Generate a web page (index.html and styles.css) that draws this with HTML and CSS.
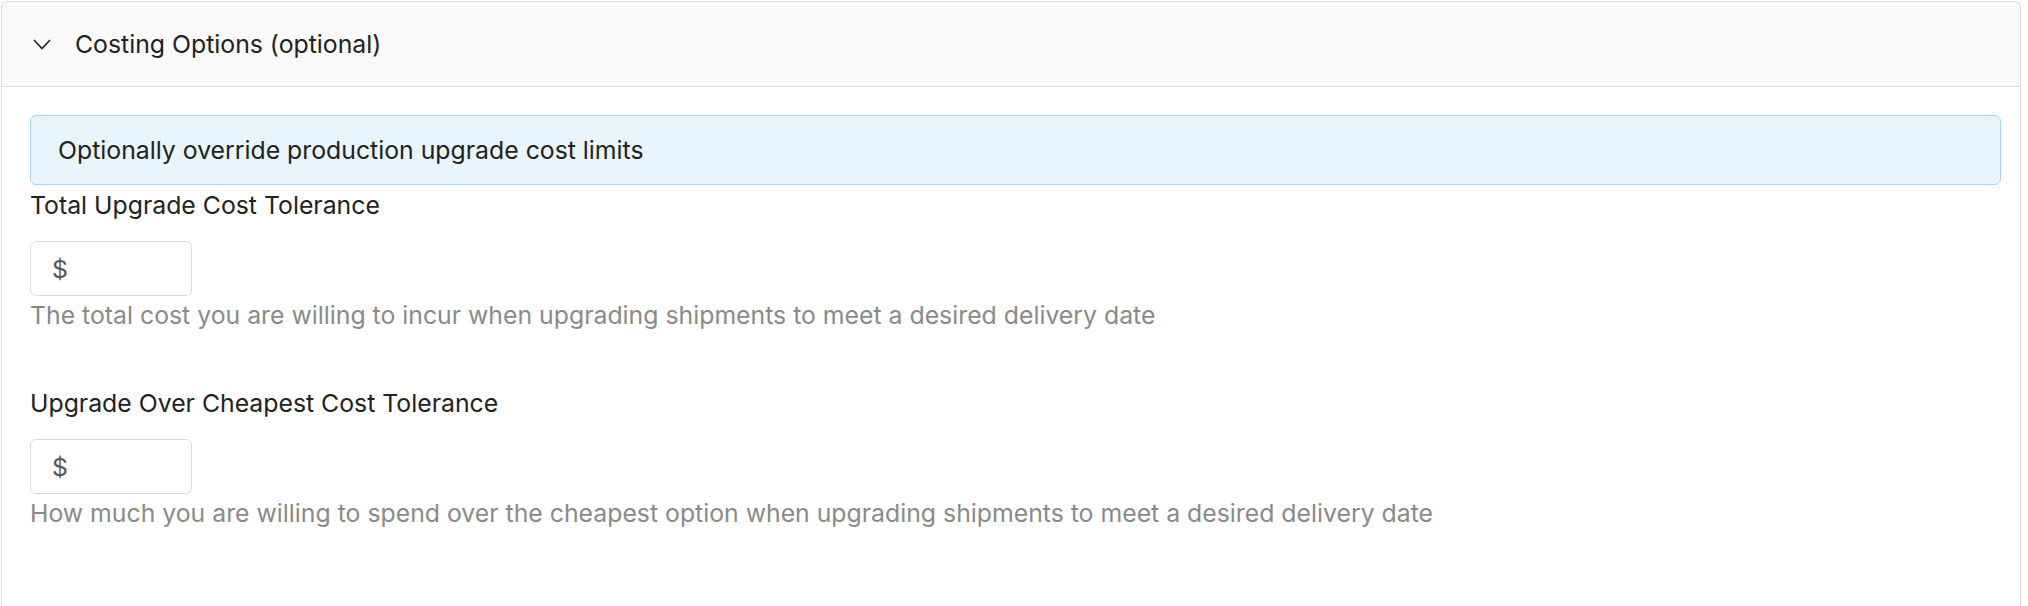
FILE: index.html
```html
<!DOCTYPE html>
<html lang="en">
<head>
    <meta charset="UTF-8">
    <meta name="viewport" content="width=device-width, initial-scale=1.0">
    <title>Costing Options</title>
    <link rel="stylesheet" href="styles.css">
</head>
<body>
    <div class="panel">
        <div class="panel-header">
            <svg class="chevron" width="18" height="11" viewBox="0 0 18 11">
                <polyline points="1,1 9,9.5 17,1" fill="none" stroke="#222" stroke-width="1.6"/>
            </svg>
            <span class="panel-title">Costing Options (optional)</span>
        </div>

        <div class="panel-body">
            <div class="alert">Optionally override production upgrade cost limits</div>

            <div class="field">
                <label for="totalCost">Total Upgrade Cost Tolerance</label>
                <div class="money-input">
                    <span class="prefix">$</span>
                    <input type="text" id="totalCost" name="totalCost">
                </div>
                <div class="help">The total cost you are willing to incur when upgrading shipments to meet a desired delivery date</div>
            </div>

            <div class="field">
                <label for="overCheapest">Upgrade Over Cheapest Cost Tolerance</label>
                <div class="money-input">
                    <span class="prefix">$</span>
                    <input type="text" id="overCheapest" name="overCheapest">
                </div>
                <div class="help">How much you are willing to spend over the cheapest option when upgrading shipments to meet a desired delivery date</div>
            </div>
        </div>
    </div>
</body>
</html>
```

FILE: styles.css
```css
body {
    font-family: Inter, "Noto Sans", sans-serif;
    font-size: 24.8px;
    color: #222;
    background-color: #fff;
    margin: 0;
    padding: 1px 7px 0 1px;
}

.panel {
    border: 1px solid #dcdcdc;
    border-bottom: none;
    border-radius: 6px 6px 0 0;
    height: 604px;
}

.panel-header {
    display: flex;
    align-items: center;
    height: 84px;
    padding-left: 31px;
    background-color: #f9f9f9;
    border-bottom: 1px solid #dcdcdc;
    border-radius: 6px 6px 0 0;
}

.chevron {
    margin-right: 24px;
}

.panel-title {
    color: #222;
}

.panel-body {
    padding: 28px 19px 0 28px;
}

.alert {
    display: flex;
    align-items: center;
    height: 68px;
    padding-left: 27px;
    background-color: #e8f5fd;
    border: 1px solid #a5d5fa;
    border-radius: 6px;
}

.field {
    margin-top: 2px;
    margin-bottom: 52px;
}

label {
    display: block;
    line-height: 36px;
    margin-bottom: 18px;
}

.money-input {
    display: flex;
    align-items: center;
    width: 160px;
    height: 53px;
    border: 1px solid #dcdcdc;
    border-radius: 6px;
    background-color: #fff;
}

.prefix {
    padding-left: 21px;
    color: #555;
}

.money-input input {
    border: none;
    outline: none;
    width: 100px;
    font: inherit;
    padding: 0 8px;
    background: transparent;
}

.help {
    margin-top: 1px;
    line-height: 36px;
    color: #8a8a8a;
}
```
